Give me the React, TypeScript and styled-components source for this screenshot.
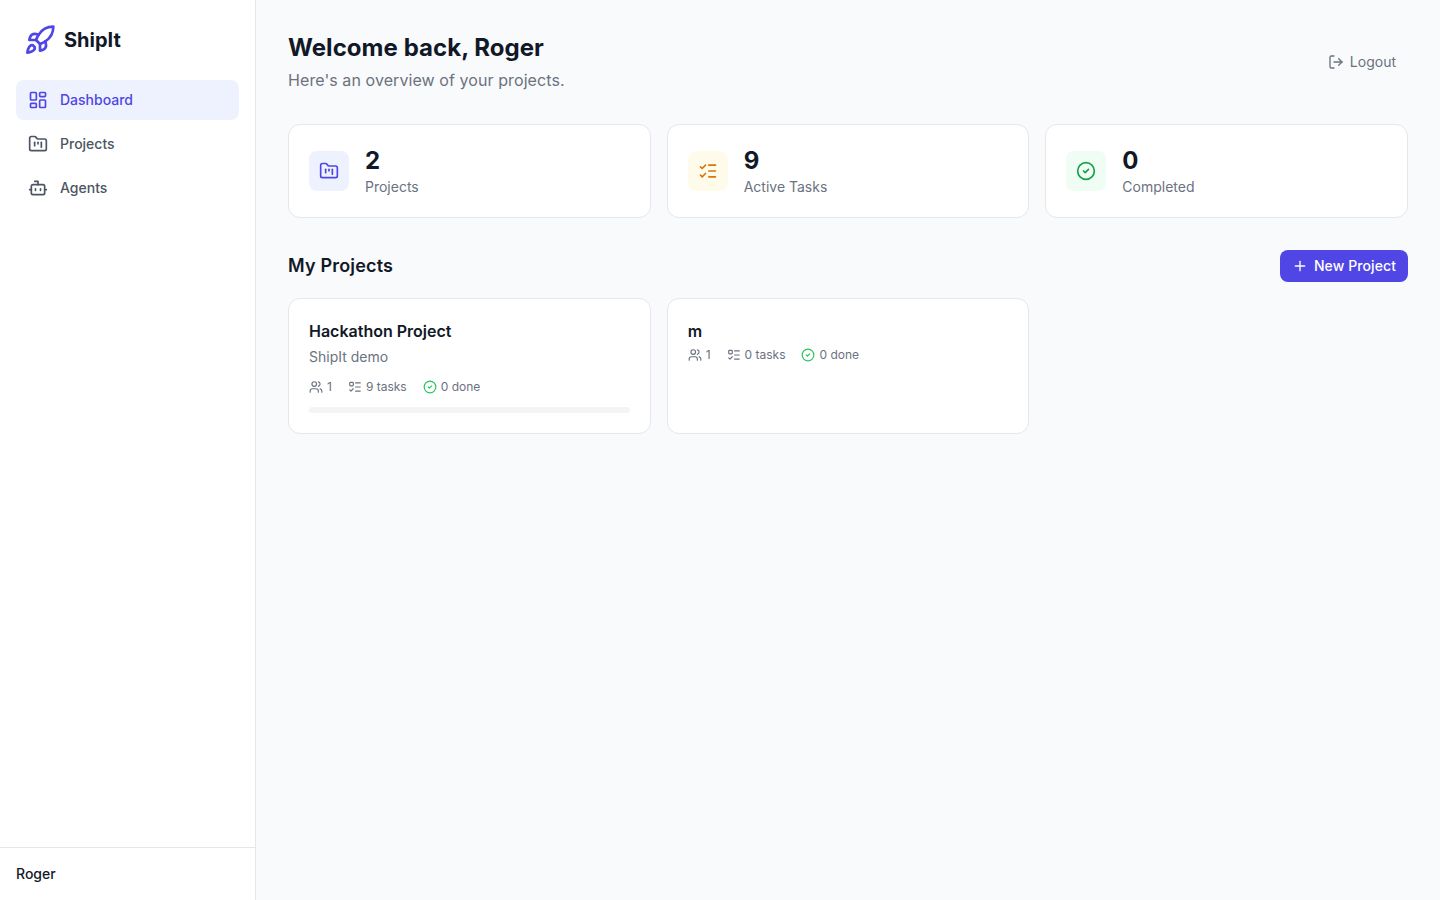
import { ReactNode } from "react"
import styled, { createGlobalStyle } from "styled-components"
import {
  Bot,
  CircleCheck,
  FolderKanban,
  LayoutDashboard,
  ListChecks,
  ListTodo,
  LogOut,
  Plus,
  Rocket,
  Users,
} from "lucide-react"

const GlobalStyle = createGlobalStyle`
  * {
    box-sizing: border-box;
  }

  html,
  body {
    margin: 0;
    height: 100%;
  }

  body {
    background: #f9fafb;
    color: #111827;
    font-family: "Inter", "Liberation Sans", sans-serif;
  }

  button {
    font-family: inherit;
  }
`

const Layout = styled.div`
  display: flex;
  height: 100vh;
  overflow: hidden;
`

const Sidebar = styled.aside`
  width: 256px;
  flex-shrink: 0;
  display: flex;
  flex-direction: column;
  background: #ffffff;
  border-right: 1px solid #e5e7eb;
`

const Brand = styled.div`
  height: 80px;
  display: flex;
  align-items: center;
  gap: 8px;
  padding: 0 24px;
  color: #4f46e5;
`

const BrandName = styled.span`
  font-size: 20px;
  line-height: 28px;
  font-weight: 700;
  color: #111827;
`

const Nav = styled.nav`
  flex: 1;
  display: flex;
  flex-direction: column;
  gap: 4px;
  padding: 0 16px;
`

const NavItem = styled.a<{ $active?: boolean }>`
  height: 40px;
  display: flex;
  align-items: center;
  gap: 12px;
  padding: 0 12px;
  border-radius: 8px;
  font-size: 14px;
  line-height: 20px;
  font-weight: 500;
  color: ${(p) => (p.$active ? "#4f46e5" : "#4b5563")};
  background: ${(p) => (p.$active ? "#eef2ff" : "transparent")};
`

const SidebarFooter = styled.div`
  height: 53px;
  display: flex;
  align-items: center;
  padding: 0 16px;
  border-top: 1px solid #e5e7eb;
  font-size: 14px;
  line-height: 20px;
  font-weight: 500;
  color: #111827;
`

const Main = styled.main`
  flex: 1;
  min-width: 0;
  padding: 32px;
`

const Header = styled.header`
  display: flex;
  align-items: center;
  justify-content: space-between;
  margin-bottom: 32px;
`

const Title = styled.h1`
  margin: 0;
  font-size: 24px;
  line-height: 32px;
  font-weight: 700;
  letter-spacing: 0.05px;
  color: #111827;
`

const Subtitle = styled.p`
  margin: 4px 0 0;
  font-size: 16px;
  line-height: 24px;
  letter-spacing: 0.08px;
  color: #6b7280;
`

const LogoutButton = styled.button`
  display: flex;
  align-items: center;
  gap: 6px;
  padding: 6px 12px;
  border: none;
  background: transparent;
  font-size: 14px;
  line-height: 20px;
  color: #6b7280;
  cursor: pointer;
`

const CardGrid = styled.div`
  display: grid;
  grid-template-columns: repeat(3, minmax(0, 1fr));
  gap: 16px;
`

const StatCard = styled.div`
  display: flex;
  align-items: center;
  gap: 16px;
  padding: 20px;
  background: #ffffff;
  border: 1px solid #e5e7eb;
  border-radius: 12px;
`

const StatIcon = styled.div<{ $bg: string; $color: string }>`
  width: 40px;
  height: 40px;
  display: flex;
  align-items: center;
  justify-content: center;
  border-radius: 8px;
  background: ${(p) => p.$bg};
  color: ${(p) => p.$color};
`

const StatValue = styled.div`
  font-size: 24px;
  line-height: 32px;
  font-weight: 700;
  color: #111827;
`

const StatLabel = styled.div`
  font-size: 14px;
  line-height: 20px;
  color: #6b7280;
`

const SectionHeader = styled.div`
  display: flex;
  align-items: center;
  justify-content: space-between;
  margin: 32px 0 16px;
`

const SectionTitle = styled.h2`
  margin: 0;
  font-size: 18px;
  line-height: 28px;
  font-weight: 600;
  letter-spacing: 0.18px;
  color: #111827;
`

const PrimaryButton = styled.button`
  height: 32px;
  display: flex;
  align-items: center;
  gap: 6px;
  padding: 0 12px;
  border: none;
  border-radius: 8px;
  background: #4f46e5;
  color: #ffffff;
  font-size: 14px;
  line-height: 20px;
  font-weight: 500;
  letter-spacing: 0.09px;
  cursor: pointer;
`

const ProjectCard = styled.div`
  display: flex;
  flex-direction: column;
  padding: 20px;
  background: #ffffff;
  border: 1px solid #e5e7eb;
  border-radius: 12px;
`

const ProjectName = styled.h3`
  margin: 0 0 4px;
  font-size: 16px;
  line-height: 24px;
  font-weight: 600;
  color: #111827;
`

const ProjectDescription = styled.p`
  margin: 0 0 12px;
  font-size: 14px;
  line-height: 20px;
  color: #6b7280;
`

const Meta = styled.div`
  display: flex;
  align-items: center;
  gap: 16px;
  font-size: 12px;
  line-height: 16px;
  color: #6b7280;
`

const MetaItem = styled.span`
  display: flex;
  align-items: center;
  gap: 4px;
`

const DoneIcon = styled(CircleCheck)`
  color: #22c55e;
`

const ProgressTrack = styled.div`
  height: 6px;
  margin-top: 12px;
  border-radius: 999px;
  background: #f3f4f6;
`

interface Stat {
  value: number
  label: string
  bg: string
  color: string
  icon: ReactNode
}

const stats: Stat[] = [
  { value: 2, label: "Projects", bg: "#eef2ff", color: "#4f46e5", icon: <FolderKanban size={20} /> },
  { value: 9, label: "Active Tasks", bg: "#fffbeb", color: "#d97706", icon: <ListChecks size={20} /> },
  { value: 0, label: "Completed", bg: "#f0fdf4", color: "#16a34a", icon: <CircleCheck size={20} /> },
]

interface Project {
  name: string
  description?: string
  members: number
  tasks: number
  done: number
}

const projects: Project[] = [
  { name: "Hackathon Project", description: "ShipIt demo", members: 1, tasks: 9, done: 0 },
  { name: "m", members: 1, tasks: 0, done: 0 },
]

export default function App() {
  return (
    <>
      <GlobalStyle />
      <Layout>
        <Sidebar>
          <Brand>
            <Rocket size={32} />
            <BrandName>ShipIt</BrandName>
          </Brand>
          <Nav>
            <NavItem $active>
              <LayoutDashboard size={20} />
              Dashboard
            </NavItem>
            <NavItem>
              <FolderKanban size={20} />
              Projects
            </NavItem>
            <NavItem>
              <Bot size={20} />
              Agents
            </NavItem>
          </Nav>
          <SidebarFooter>Roger</SidebarFooter>
        </Sidebar>
        <Main>
          <Header>
            <div>
              <Title>Welcome back, Roger</Title>
              <Subtitle>Here's an overview of your projects.</Subtitle>
            </div>
            <LogoutButton>
              <LogOut size={16} />
              Logout
            </LogoutButton>
          </Header>

          <CardGrid>
            {stats.map((s) => (
              <StatCard key={s.label}>
                <StatIcon $bg={s.bg} $color={s.color}>
                  {s.icon}
                </StatIcon>
                <div>
                  <StatValue>{s.value}</StatValue>
                  <StatLabel>{s.label}</StatLabel>
                </div>
              </StatCard>
            ))}
          </CardGrid>

          <SectionHeader>
            <SectionTitle>My Projects</SectionTitle>
            <PrimaryButton>
              <Plus size={16} />
              New Project
            </PrimaryButton>
          </SectionHeader>

          <CardGrid>
            {projects.map((p) => (
              <ProjectCard key={p.name}>
                <ProjectName>{p.name}</ProjectName>
                {p.description && <ProjectDescription>{p.description}</ProjectDescription>}
                <Meta>
                  <MetaItem>
                    <Users size={14} />
                    {p.members}
                  </MetaItem>
                  <MetaItem>
                    <ListTodo size={14} />
                    {p.tasks} tasks
                  </MetaItem>
                  <MetaItem>
                    <DoneIcon size={14} />
                    {p.done} done
                  </MetaItem>
                </Meta>
                {p.tasks > 0 && <ProgressTrack />}
              </ProjectCard>
            ))}
          </CardGrid>
        </Main>
      </Layout>
    </>
  )
}
